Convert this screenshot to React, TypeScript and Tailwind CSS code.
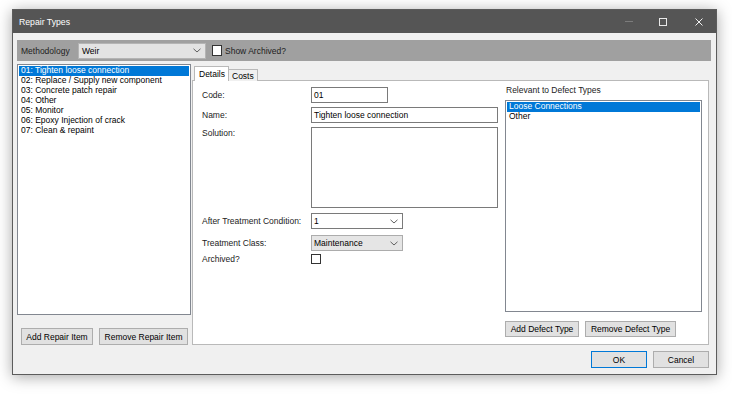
import React from 'react';

const repairItems = [
  '01: Tighten loose connection',
  '02: Replace / Supply new component',
  '03: Concrete patch repair',
  '04: Other',
  '05: Monitor',
  '06: Epoxy Injection of crack',
  '07: Clean & repaint',
];

const defectTypes = ['Loose Connections', 'Other'];

const Chevron = () => (
  <svg width="8" height="5" viewBox="0 0 8 5" className="shrink-0">
    <path d="M0.5 0.8 L4 4 L7.5 0.8" fill="none" stroke="#606060" strokeWidth="1" />
  </svg>
);

const Button = ({ label, className = '' }: { label: string; className?: string }) => (
  <div
    className={`flex items-center justify-center border border-[#adadad] bg-[#e1e1e1] text-black ${className}`}
  >
    {label}
  </div>
);

const ListBox = ({ items, selected, className = '' }: { items: string[]; selected: number; className?: string }) => (
  <div className={`border border-[#828790] bg-white p-[1px] ${className}`}>
    {items.map((item, i) => (
      <div
        key={item}
        className={`h-[10px] leading-[9px] pl-[2px] whitespace-nowrap ${
          i === selected ? 'bg-[#0078d7] text-white' : 'text-black'
        }`}
      >
        {item}
      </div>
    ))}
  </div>
);

const FormRow = ({ label, children }: { label: string; children: React.ReactNode }) => (
  <div className="flex items-center h-[16px]">
    <div className="w-[109px] text-[#222]">{label}</div>
    {children}
  </div>
);

export default function App() {
  return (
    <div className="w-[732px] h-[394px] bg-white pt-[9px] pl-[12px] font-['Liberation_Sans',Arial,sans-serif] text-[8.5px] leading-[10px]">
      <div className="w-[705px] h-[366px] flex flex-col border border-[#5c5c5c] bg-[#f0f0f0] shadow-[0_2px_14px_rgba(0,0,0,0.35)]">
        {/* title bar */}
        <div className="h-[23px] shrink-0 bg-[#555555] flex items-center pl-[6px] text-white">
          <span className="text-[8.7px]">Repair Types</span>
          <div className="ml-auto flex items-center">
            <div className="w-[8px] h-px bg-[#7c7c7c] mr-[26px]" />
            <div className="w-[8px] h-[8px] border border-[#e8e8e8] mr-[28px]" />
            <svg width="8" height="8" viewBox="0 0 8 8" className="mr-[13px]">
              <path d="M0.5 0.5 L7.5 7.5 M7.5 0.5 L0.5 7.5" stroke="#f0f0f0" strokeWidth="1" />
            </svg>
          </div>
        </div>

        <div className="flex-1 flex flex-col pt-[7px] pl-[4px] pr-[5px]">
          {/* methodology bar */}
          <div className="h-[21px] shrink-0 bg-[#a0a0a0] flex items-center pl-[4px] text-[#1e1e1e]">
            <span className="w-[57px]">Methodology</span>
            <div className="w-[128px] h-[16px] bg-[#e3e3e3] border border-[#b4b4b4] flex items-center pl-[3px] pr-[4px] text-black">
              <span>Weir</span>
              <span className="ml-auto">
                <Chevron />
              </span>
            </div>
            <div className="ml-[6px] w-[10px] h-[11px] bg-white border border-[#333]" />
            <span className="ml-[3px] text-[#1e1e1e]">Show Archived?</span>
          </div>

          {/* main area */}
          <div className="flex">
            <div className="w-[174px] shrink-0 flex flex-col">
              <ListBox items={repairItems} selected={0} className="mt-[3px] h-[251px]" />
              <div className="flex mt-[13px] pl-[4px] gap-[6px]">
                <Button label="Add Repair Item" className="w-[72px] h-[17px]" />
                <Button label="Remove Repair Item" className="w-[89px] h-[17px]" />
              </div>
            </div>

            <div className="w-[517px] ml-px flex flex-col mt-[5px]">
              <div className="flex items-end pl-[2px] h-[15px] -mb-px relative z-10">
                <div className="w-[35px] h-[15px] bg-white border border-b-0 border-[#b9b9b9] pl-[4px] pt-[2px] text-black">
                  Details
                </div>
                <div className="w-[29px] h-[12px] bg-[#f0f0f0] border border-l-0 border-b-0 border-[#b9b9b9] pl-[3px] pt-px text-black">
                  Costs
                </div>
              </div>
              <div className="h-[265px] bg-white border border-[#b9b9b9] flex">
                {/* form */}
                <div className="flex flex-col pl-[9px] pt-[6px] w-[312px] shrink-0">
                  <FormRow label="Code:">
                    <div className="w-[77px] h-[16px] border border-[#7a7a7a] pl-[2px] flex items-center text-black">01</div>
                  </FormRow>
                  <div className="mt-[4px]">
                    <FormRow label="Name:">
                      <div className="w-[187px] h-[16px] border border-[#7a7a7a] pl-[2px] flex items-center text-black">
                        Tighten loose connection
                      </div>
                    </FormRow>
                  </div>
                  <div className="flex mt-[4px]">
                    <div className="w-[109px] text-[#222] pt-px">Solution:</div>
                    <div className="w-[187px] h-[81px] border border-[#7a7a7a]" />
                  </div>
                  <div className="mt-[5px]">
                    <FormRow label="After Treatment Condition:">
                      <div className="w-[92px] h-[16px] border border-[#7a7a7a] bg-white flex items-center pl-[2px] pr-[4px] text-black">
                        <span>1</span>
                        <span className="ml-auto">
                          <Chevron />
                        </span>
                      </div>
                    </FormRow>
                  </div>
                  <div className="mt-[6px]">
                    <FormRow label="Treatment Class:">
                      <div className="w-[92px] h-[16px] border border-[#acacac] bg-[#e5e5e5] flex items-center pl-[2px] pr-[4px] text-black">
                        <span>Maintenance</span>
                        <span className="ml-auto">
                          <Chevron />
                        </span>
                      </div>
                    </FormRow>
                  </div>
                  <FormRow label="Archived?">
                    <div className="w-[10px] h-[10px] border border-[#333] bg-white" />
                  </FormRow>
                </div>

                {/* defect types */}
                <div className="flex flex-col">
                  <div className="mt-[4px] text-[#222] pl-px">Relevant to Defect Types</div>
                  <ListBox items={defectTypes} selected={0} className="mt-[5px] w-[197px] h-[212px]" />
                  <div className="flex mt-[9px] gap-[6px]">
                    <Button label="Add Defect Type" className="w-[74px] h-[16px]" />
                    <Button label="Remove Defect Type" className="w-[91px] h-[16px]" />
                  </div>
                </div>
              </div>
            </div>
          </div>

          {/* footer */}
          <div className="flex justify-end gap-[6px] mt-[6px] pr-[2px]">
            <Button label="OK" className="w-[56px] h-[17px] !border-[#0078d7]" />
            <Button label="Cancel" className="w-[56px] h-[17px]" />
          </div>
        </div>
      </div>
    </div>
  );
}
